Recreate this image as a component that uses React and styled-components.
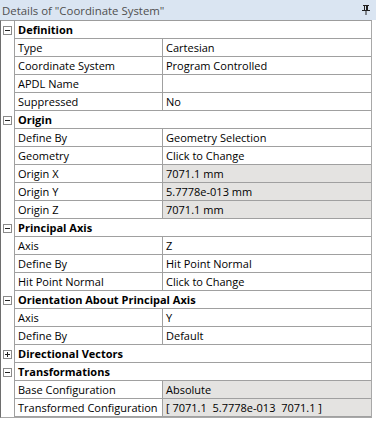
import React from 'react';
import styled, { createGlobalStyle } from 'styled-components';

const GlobalStyle = createGlobalStyle`
  html, body {
    margin: 0;
    padding: 0;
    background: #ffffff;
  }
  body {
    font-family: 'Open Sans', 'Noto Sans', sans-serif;
  }
`;

const Panel = styled.div`
  width: 376px;
  height: 421px;
  background: #ffffff;
  overflow: hidden;
`;

const TitleBar = styled.div`
  height: 20px;
  display: flex;
  align-items: center;
  justify-content: space-between;
  padding: 0 6px 0 2px;
  box-sizing: border-box;
  background: #dae5f2;
  color: #4f4f4f;
  font-size: 11.4px;
`;

const Table = styled.div`
  width: 372px;
  border-top: 1px solid #9c9c9c;
  border-left: 1px solid #6e6e6e;
  border-right: 1px solid #a8a8a8;
  border-bottom: 1px solid #a8a8a8;
  box-sizing: border-box;
  font-size: 11px;
  color: #000000;
`;

const Row = styled.div`
  display: flex;
  height: 18px;
`;

const Gutter = styled.div`
  width: 14px;
  flex: none;
  display: flex;
  align-items: center;
  justify-content: center;
  border-right: 1px solid #a0a0a0;
  box-sizing: border-box;
  padding-right: 1px;
`;

const ToggleBox = styled.div`
  width: 9px;
  height: 9px;
  box-sizing: border-box;
  border: 1px solid #8a8a8a;
  background: #ffffff;
  position: relative;
  &::before {
    content: '';
    position: absolute;
    left: 1px;
    top: 3px;
    width: 5px;
    height: 1px;
    background: #222222;
  }
  &::after {
    content: '';
    display: ${(p) => (p.collapsed ? 'block' : 'none')};
    position: absolute;
    left: 3px;
    top: 1px;
    width: 1px;
    height: 5px;
    background: #222222;
  }
`;

const Cell = styled.div`
  box-sizing: border-box;
  height: 18px;
  line-height: 17px;
  padding-left: 3px;
  border-bottom: 1px solid #a0a0a0;
  white-space: pre;
  overflow: hidden;
`;

const GroupLabel = styled(Cell)`
  flex: 1;
  font-weight: 700;
`;

const NameCell = styled(Cell)`
  width: 148px;
  flex: none;
  border-right: 1px solid #a0a0a0;
`;

const ValueCell = styled(Cell)`
  flex: 1;
  background: ${(p) => (p.readOnly ? '#e4e3e1' : '#ffffff')};
`;

const PinIcon = () => (
  <svg width="8" height="10" viewBox="0 0 8 10">
    <rect x="1" y="0" width="6" height="1" fill="#222" />
    <rect x="2" y="1" width="1" height="4" fill="#222" />
    <rect x="4" y="1" width="2" height="4" fill="#222" />
    <rect x="0" y="5" width="8" height="1" fill="#222" />
    <rect x="3.5" y="6" width="1" height="4" fill="#222" />
  </svg>
);

const groups = [
  {
    name: 'Definition',
    rows: [
      ['Type', 'Cartesian'],
      ['Coordinate System', 'Program Controlled'],
      ['APDL Name', ''],
      ['Suppressed', 'No'],
    ],
  },
  {
    name: 'Origin',
    rows: [
      ['Define By', 'Geometry Selection'],
      ['Geometry', 'Click to Change'],
      ['Origin X', '7071.1 mm', true],
      ['Origin Y', '5.7778e-013 mm', true],
      ['Origin Z', '7071.1 mm', true],
    ],
  },
  {
    name: 'Principal Axis',
    rows: [
      ['Axis', 'Z'],
      ['Define By', 'Hit Point Normal'],
      ['Hit Point Normal', 'Click to Change'],
    ],
  },
  {
    name: 'Orientation About Principal Axis',
    rows: [
      ['Axis', 'Y'],
      ['Define By', 'Default'],
    ],
  },
  { name: 'Directional Vectors', collapsed: true, rows: [] },
  {
    name: 'Transformations',
    rows: [
      ['Base Configuration', 'Absolute', true],
      ['Transformed Configuration', '[ 7071.1  5.7778e-013  7071.1 ]', true],
    ],
  },
];

const App = () => {
  return (
    <Panel>
      <GlobalStyle />
      <TitleBar>
        <span>Details of "Coordinate System"</span>
        <PinIcon />
      </TitleBar>
      <Table>
        {groups.map((group) => (
          <React.Fragment key={group.name}>
            <Row>
              <Gutter>
                <ToggleBox collapsed={group.collapsed} />
              </Gutter>
              <GroupLabel>{group.name}</GroupLabel>
            </Row>
            {group.rows.map(([name, value, readOnly], index) => (
              <Row key={index}>
                <Gutter />
                <NameCell>{name}</NameCell>
                <ValueCell readOnly={readOnly}>{value}</ValueCell>
              </Row>
            ))}
          </React.Fragment>
        ))}
      </Table>
    </Panel>
  );
};

export default App;
